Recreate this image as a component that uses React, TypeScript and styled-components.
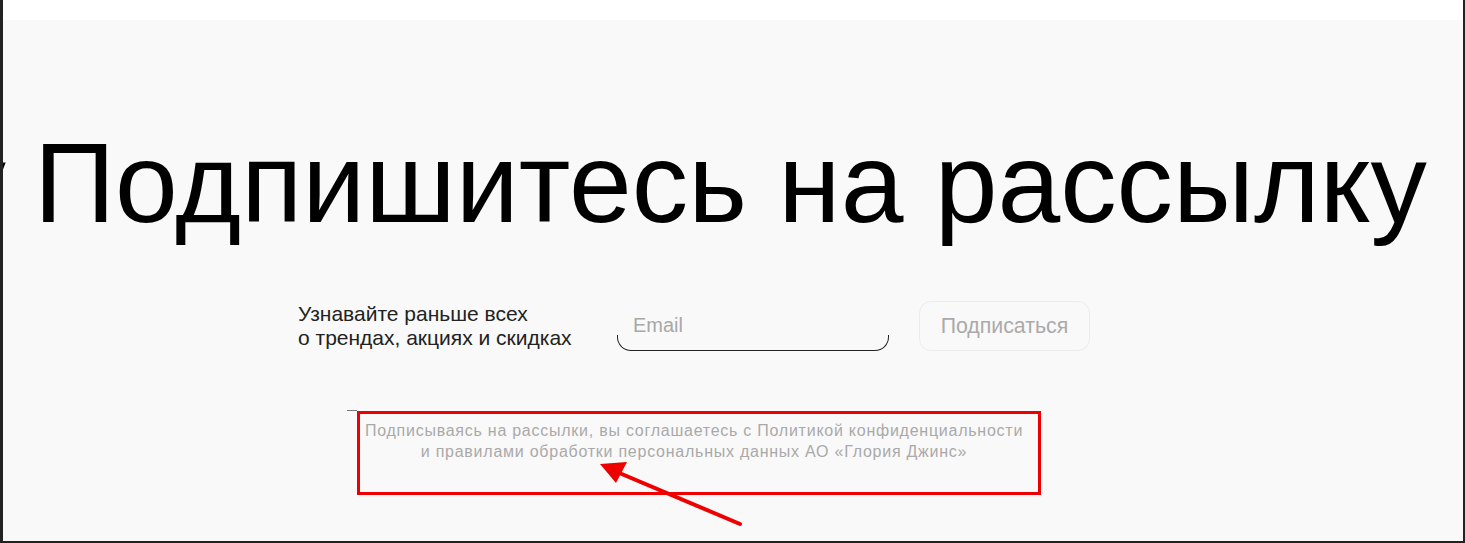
import React from "react";
import styled, { createGlobalStyle } from "styled-components";

const Global = createGlobalStyle`
  html, body { margin: 0; padding: 0; background: #222; }
  body { font-family: "Liberation Sans", Arial, sans-serif; }
  * { box-sizing: border-box; }
`;

const Frame = styled.div`
  position: relative;
  width: 1465px;
  height: 543px;
  background: #f9f9f9;
  border-left: 3px solid #222;
  border-right: 2px solid #222;
  border-bottom: 2px solid #222;
  overflow: hidden;
`;

const TopBar = styled.div`
  height: 20px;
  background: #fff;
`;

const Marquee = styled.div`
  display: flex;
  gap: 28px;
  white-space: nowrap;
  margin-top: 98px;
`;

const GhostSlot = styled.div`
  flex: none;
  width: 3px;
  display: flex;
  justify-content: flex-end;
`;

const Headline = styled.h1`
  margin: 0;
  flex: none;
  font-family: "Liberation Sans", Arial, sans-serif;
  font-weight: 400;
  font-size: 112.8px;
  line-height: 130px;
  color: #000;
`;

const FormRow = styled.div`
  display: flex;
  align-items: center;
  margin-top: 53px;
  padding-left: 295px;
`;

const Lead = styled.p`
  margin: 0;
  width: 319px;
  font-size: 21px;
  line-height: 24px;
  color: #222;
`;

const Field = styled.label`
  position: relative;
  display: block;
  width: 272px;
  height: 50px;
  &::after {
    content: "";
    position: absolute;
    left: 0;
    right: 0;
    bottom: 0;
    height: 15px;
    border: 1px solid #222;
    border-top: none;
    border-radius: 0 0 14px 14px;
  }
`;

const EmailInput = styled.input`
  width: 100%;
  height: 100%;
  border: none;
  background: transparent;
  outline: none;
  padding: 0 16px 2px;
  font-family: "Liberation Sans", Arial, sans-serif;
  font-size: 20px;
  color: #222;
  &::placeholder { color: #a8a8a8; }
`;

const SubmitButton = styled.button`
  margin-left: 30px;
  width: 171px;
  height: 50px;
  padding: 0;
  border: 1px solid #ececec;
  border-radius: 12px;
  background: #f9f9f9;
  font-family: "Liberation Sans", Arial, sans-serif;
  font-size: 21.3px;
  color: #aaa;
  cursor: pointer;
`;

const Notice = styled.div`
  position: relative;
  margin-top: 69px;
  margin-left: 344px;
  width: 694px;
  text-align: center;
`;

const Tick = styled.span`
  position: absolute;
  left: 0;
  top: -10px;
  width: 10px;
  height: 1px;
  background: #777;
`;

const NoticeText = styled.p`
  margin: 0;
  font-family: "Liberation Sans", Arial, sans-serif;
  font-size: 16px;
  line-height: 21px;
  color: #a9a9a9;
  letter-spacing: 0.75px;
  white-space: nowrap;
`;

const Highlight = styled.div`
  position: absolute;
  left: 354px;
  top: 411px;
  width: 684px;
  height: 84px;
  border: 3.5px solid #ee0000;
  pointer-events: none;
`;

const Arrow = styled.svg`
  position: absolute;
  left: 0;
  top: 0;
  pointer-events: none;
`;

export default function App() {
  const title = "Подпишитесь на рассылку";
  return (
    <>
      <Global />
      <Frame>
        <TopBar />
        <Marquee>
          <GhostSlot aria-hidden>
            <Headline as="div">{title}</Headline>
          </GhostSlot>
          <Headline>{title}</Headline>
        </Marquee>
        <FormRow>
          <Lead>
            Узнавайте раньше всех
            <br />о трендах, акциях и скидках
          </Lead>
          <Field>
            <EmailInput type="email" placeholder="Email" />
          </Field>
          <SubmitButton type="button">Подписаться</SubmitButton>
        </FormRow>
        <Notice>
          <Tick />
          <NoticeText>
            Подписываясь на рассылки, вы соглашаетесь с Политикой конфиденциальности
            <br />и правилами обработки персональных данных АО «Глория Джинс»
          </NoticeText>
        </Notice>
        <Highlight />
        <Arrow width="1465" height="543" viewBox="0 0 1465 543">
          <line x1="737" y1="524" x2="614" y2="472" stroke="#ee0000" strokeWidth="4" strokeLinecap="round" />
          <polygon points="597,464 624,462 613,483" fill="#ee0000" />
        </Arrow>
      </Frame>
    </>
  );
}
